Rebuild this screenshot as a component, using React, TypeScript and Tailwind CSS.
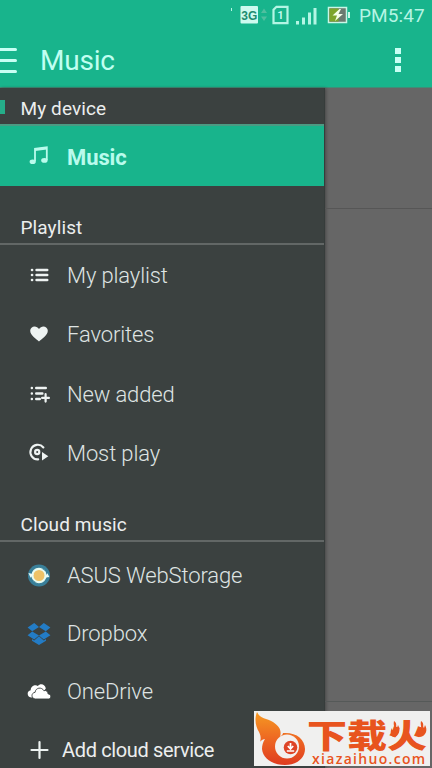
import React from 'react'

const ink = '#eef3f2'

function NoteIcon() {
  return (
    <svg width="22" height="22" viewBox="0 0 22 22" fill="none" stroke="#b9fbec" strokeWidth="1.8">
      <path d="M7 16.2V3.8L18.8 2.3v12.6" />
      <path d="M7 4.8L18.8 3.3" strokeWidth="2.6" />
      <ellipse cx="4.7" cy="16.7" rx="3.1" ry="2.3" fill="#b9fbec" stroke="none" />
      <ellipse cx="16.4" cy="15.4" rx="3.2" ry="2.4" fill="#b9fbec" stroke="none" />
    </svg>
  )
}

function ListIcon() {
  return (
    <svg width="22" height="22" viewBox="0 0 22 22" stroke={ink} strokeWidth="2.6" strokeLinecap="round">
      <path d="M4 5h.1M4 10h.1M4 15h.1" />
      <path d="M8.6 5H19.2M8.6 10H19.2M8.6 15H19.2" />
    </svg>
  )
}

function HeartIcon() {
  return (
    <svg width="22" height="22" viewBox="0 0 22 22" fill={ink}>
      <path d="M11 17.6C8.6 15.2 2.2 11.3 2.2 6.8c0-4.8 6.4-6 8.8-1.8 2.4-4.2 8.8-3 8.800 1.8 0 4.5-6.4 8.4-8.800 10.800z" />
    </svg>
  )
}

function ListPlusIcon() {
  return (
    <svg width="22" height="22" viewBox="0 0 22 22" stroke={ink} strokeWidth="2.4" strokeLinecap="round">
      <path d="M3.8 4h.1M3.8 9.5h.1M3.8 15h.1" />
      <path d="M8.2 4H17.8M8.2 9.5H14.4M8.2 15H11.8" />
      <path d="M17.6 10.2v7.4M14.1 13.9h6.8" strokeWidth="2.2" />
    </svg>
  )
}

function MostPlayIcon() {
  return (
    <svg width="22" height="22" viewBox="0 0 22 22" fill="none" stroke={ink} strokeLinecap="round">
      <path d="M15.4 4.5A7.3 7.3 0 1 0 10.2 16.4" strokeWidth="2.1" />
      <circle cx="9.2" cy="9" r="2.1" strokeWidth="2.2" />
      <path d="M14 9v8.5l6.3-4.2z" fill={ink} stroke="none" />
    </svg>
  )
}

function WebStorageIcon() {
  return (
    <svg width="24" height="24" viewBox="0 0 24 24" fill="none">
      <circle cx="12" cy="11.500" r="11" fill="#397f99" />
      <circle cx="12" cy="11.500" r="6.6" fill="#efc267" stroke="#eafbf0" strokeWidth="2.200" />
      <path d="M1.4 8.900l2.200 4.800 3.200-3.400zM22.400 12.900l-5 .8 3-4.400z" fill="#eafbf7" />
      <path d="M6 16.500l3.500 2.500M18 6.500L14.500 4" stroke="#5f9dad" strokeWidth="1" />
    </svg>
  )
}

function DropboxIcon() {
  return (
    <svg width="24" height="24" viewBox="0 0 24 24" fill="#237cc6">
      <path d="M7.2 1L12 5 5.2 9.2.6 5.400zM16.8 1L12 5l6.8 4.2 4.6-3.8zM.6 13.200l4.6-3.8L12 13.600l-4.8 4zM23.4 13.200l-4.6-3.8-6.8 4.2 4.8 4z" />
      <path d="M12 14.2l4.8 4.200 2.2-1.4v1.800l-7 4.2-7-4.2v-1.800l2.2 1.4z" />
    </svg>
  )
}

function OneDriveIcon() {
  return (
    <svg width="24" height="24" viewBox="0 0 24 24" fill="#fff">
      <path d="M5 17.500C-.2 17.500-.8 11 3.700 10.200 3.600 5.800 8.600 4 10.800 6 13.600 2.600 18.400 4.600 18.800 8.500L12 17.500z" />
      <path d="M8.600 19C3.800 18.800 3.900 12.800 8.100 12.300 8.400 7.700 14.800 6.500 16.800 10.700 19.300 9.900 21 11.500 21 13.800 25 14.400 24.200 19 21.400 19z" stroke="#3b4140" strokeWidth="0.900" />
    </svg>
  )
}

function PlusIcon() {
  return (
    <svg width="20" height="20" viewBox="0 0 20 20" stroke={ink} strokeWidth="2.2" strokeLinecap="round">
      <path d="M9.500 2v16M1.500 10h16" />
    </svg>
  )
}

function StatusBar() {
  return (
    <div className="flex h-8 items-center pl-[230px] text-[#b4f5e4]">
      <svg className="shrink-0" width="124" height="32" viewBox="0 0 124 32">
        <path d="M1.5 8v3" stroke="#b4f5e4" strokeWidth="1" />
        <rect x="10.5" y="6" width="17.5" height="17.5" rx="1" fill="#cdfaef" />
        <text x="19.3" y="19.5" fontFamily="Liberation Sans, sans-serif" fontSize="12" fontWeight="700" textAnchor="middle" fill="#1d8c70">3G</text>
        <path d="M34 8.5l3 4.5h-6zM34 21l3-4.500h-6z" fill="#4fbf9f" />
        <path d="M46.5 6.8H57.5v16.4H43.5V9.8z" fill="none" stroke="#b4f5e4" strokeWidth="2.2" />
        <text x="50.5" y="19.2" fontFamily="Roboto, sans-serif" fontSize="11.5" fontWeight="500" textAnchor="middle" fill="#d0fff4">1</text>
        <path d="M67.5 21v3.5M73.5 17.5v7M79.5 12.5v12M85 8v16.5" stroke="#b4f5e4" strokeWidth="3" />
        <rect x="98.5" y="7.5" width="18" height="15" fill="#6b7a70" stroke="#c8f7e6" strokeWidth="1.5" />
        <path d="M99.5 8.5h9v13h-9z" fill="#7da52b" />
        <path d="M118 12h2v6h-2z" fill="#c8f7e6" />
        <path d="M109.5 9l-7 6.5h4.5l-2 5.5 8-7h-4.500l2.500-5z" fill="#f4ffe8" />
      </svg>
      <span className="ml-[5px] text-[19px] leading-8 tracking-[0.1px] whitespace-nowrap">PM5:47</span>
    </div>
  )
}

function SectionTitle({ children }: { children: React.ReactNode }) {
  return (
    <h2 className="flex h-[59px] shrink-0 items-end border-b-2 border-[#626766] pb-[3px] pl-[20.5px] text-[19px] leading-[24px] tracking-[0.1px] text-[#eceeee]">
      {children}
    </h2>
  )
}

function Item({ icon, children }: { icon: React.ReactNode; children: React.ReactNode }) {
  return (
    <li className="flex flex-1 items-center pl-[27px] text-[22px] leading-7 font-light tracking-[-0.13px] text-[#dfe4e3]">
      <span className="mr-4 flex w-6 justify-center">{icon}</span>
      <span className="whitespace-nowrap">{children}</span>
    </li>
  )
}

function Watermark() {
  return (
    <div className="absolute top-[711px] left-[254px] flex h-[55px] w-[176px] bg-[#f0f0ef] text-[#e8541e]">
      <svg className="shrink-0" width="53" height="55" viewBox="0 0 53 55">
        <defs>
          <linearGradient id="flame" x1="0" y1="0" x2="0" y2="1">
            <stop offset="0" stopColor="#f59a22" />
            <stop offset="0.5" stopColor="#ee6822" />
            <stop offset="1" stopColor="#df3c20" />
          </linearGradient>
        </defs>
        <path
          fill="url(#flame)"
          d="M3 1c3 7 10 6 16 10 6 4 9 8 7 15 2-2 3-3 3-4 13-1 22 6 22 16 0 9-8 16-20 16-12 0-22-6-23-16 0-4 1-7 3-10-3 0-5 3-5 3 1-3 1-6-1-10C2 16 0 9 3 1z"
        />
        <circle cx="33" cy="35.5" r="12" fill="#f3f0ee" />
        <circle cx="36.5" cy="36.5" r="6.8" fill="#de4426" />
        <path d="M36.5 32v5M33.8 35l2.7 3 2.7-3M32.8 40h7.4" fill="none" stroke="#fff" strokeWidth="1.7" />
      </svg>
      <div className="relative flex flex-col pt-[7px]">
        <span className="h-[36px] origin-top scale-y-[0.82] font-['Noto_Sans_CJK_SC',sans-serif] text-[40px] leading-[40px] font-black whitespace-nowrap">
          下载火
        </span>
        {/* Little flames licking off the last character */}
        <svg className="absolute top-[9px] left-[81px]" width="40" height="20" viewBox="0 0 40 20" fill="#e8541e">
          <path d="M6 1c4 3 1 5 3 7l1-3c3 5 1 11-4 12C2 16 2 11 4 8c0 2 1 3 2 2 1-3-1-5 0-9z" />
          <path d="M33 1c4 3 1 5 3 7l1-3c3 5 1 11-5 12-4-1-4-5-1-8 0 2 1 2 2 1 1-3-1-5 0-9z" />
        </svg>
        <span className="pl-[5px] font-['Open_Sans',sans-serif] text-[14px] leading-[10px] font-semibold tracking-[1.3px] whitespace-nowrap">
          xiazaihuo.com
        </span>
      </div>
    </div>
  )
}

export default function App() {
  return (
    <div className="relative flex h-[768px] w-[432px] flex-col overflow-hidden bg-[#666] font-[Roboto,sans-serif]">
      {/* Status and title bars */}
      <header className="h-[88px] shrink-0 border-b border-[#3f8d77] bg-[#18b48c]">
        <StatusBar />
        <div className="flex h-[56px] items-center text-[#c0fff1]">
          <div className="flex w-[17px] flex-col gap-2">
            <div className="h-[3px] rounded-r-full bg-[#c8fff4]"></div>
            <div className="h-[3px] rounded-r-full bg-[#c8fff4]"></div>
            <div className="h-[3px] rounded-r-full bg-[#c8fff4]"></div>
          </div>
          <h1 className="mt-px ml-[23px] flex-1 text-[28px] leading-9 tracking-[-0.2px]">Music</h1>
          <div className="mr-[31px] flex flex-col gap-[3px]">
            <div className="size-[6px] bg-[#c8fff4]"></div>
            <div className="size-[6px] bg-[#c8fff4]"></div>
            <div className="size-[6px] bg-[#c8fff4]"></div>
          </div>
        </div>
      </header>

      <div className="flex min-h-0 flex-1">
        {/* Drawer */}
        <nav className="flex w-[325px] shrink-0 flex-col border-r border-[#363c3b] bg-[#3b4140] shadow-[1px_0_3px_rgba(0,0,0,0.3)]">
          <div className="flex h-[38px] shrink-0 items-center border-b-2 border-[#4c9a83]">
            <div className="mt-[2px] h-[14px] w-[5px] bg-[#25ad89]"></div>
            <h2 className="mt-[6px] ml-[15.5px] text-[19px] leading-6 tracking-[0.1px] text-[#eceeee]">My device</h2>
          </div>
          <div className="flex h-[60px] shrink-0 items-center bg-[#18b48c] pl-[28px] text-[22px] font-bold tracking-[-0.1px] text-[#b9fbec]">
            <NoteIcon />
            <span className="mt-[2px] ml-[17px]">Music</span>
          </div>

          <SectionTitle>Playlist</SectionTitle>
          <ul className="mt-px flex h-[238px] shrink-0 flex-col">
            <Item icon={<ListIcon />}>My playlist</Item>
            <Item icon={<HeartIcon />}>Favorites</Item>
            <Item icon={<ListPlusIcon />}>New added</Item>
            <Item icon={<MostPlayIcon />}>Most play</Item>
          </ul>

          <div className="-mt-px flex shrink-0 flex-col">
            <SectionTitle>Cloud music</SectionTitle>
          </div>
          <ul className="mt-[5px] flex h-[174px] shrink-0 flex-col">
            <Item icon={<WebStorageIcon />}>ASUS WebStorage</Item>
            <Item icon={<DropboxIcon />}>Dropbox</Item>
            <Item icon={<OneDriveIcon />}>OneDrive</Item>
          </ul>
          <div className="flex h-[58px] shrink-0 items-center pl-[30px] text-[20px] tracking-[-0.35px] text-[#eceeee]">
            <PlusIcon />
            <span className="ml-[12px]">Add cloud service</span>
          </div>
        </nav>

        {/* Dimmed content behind the drawer */}
        <main className="flex-1">
          <div className="h-[121px] border-b border-[#565656]"></div>
          <div className="h-[493px] border-b border-[#555958]"></div>
        </main>
      </div>

      <Watermark />
    </div>
  )
}
